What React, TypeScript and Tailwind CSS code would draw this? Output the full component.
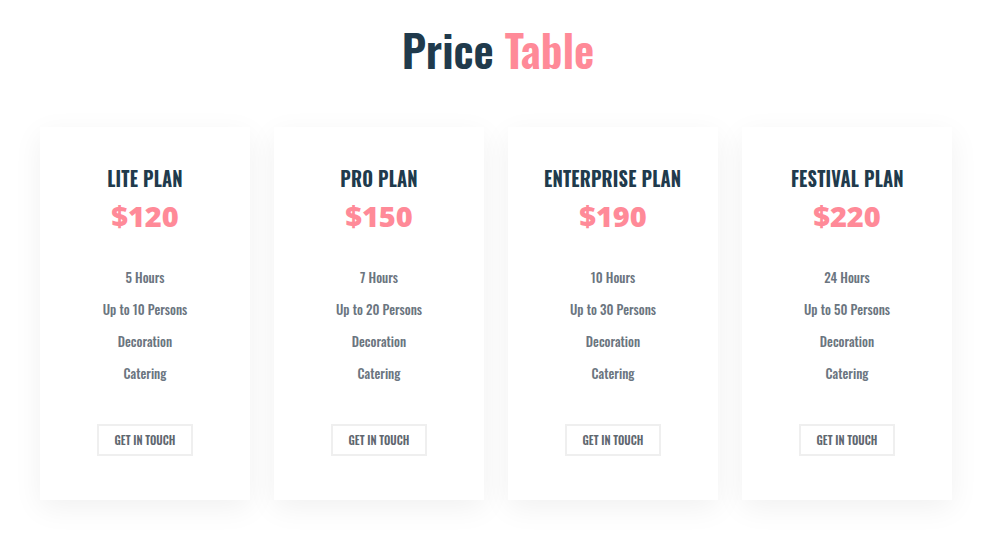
const plans = [
  { name: "LITE PLAN", price: "$120", hours: "5 Hours", persons: "Up to 10 Persons" },
  { name: "PRO PLAN", price: "$150", hours: "7 Hours", persons: "Up to 20 Persons" },
  { name: "ENTERPRISE PLAN", price: "$190", hours: "10 Hours", persons: "Up to 30 Persons" },
  { name: "FESTIVAL PLAN", price: "$220", hours: "24 Hours", persons: "Up to 50 Persons" },
];

const narrow = "font-['Oswald','Liberation_Sans_Narrow','DejaVu_Sans_Condensed',sans-serif]";

function PlanCard({ plan }: { plan: (typeof plans)[number] }) {
  return (
    <div className="w-[210px] h-[373px] bg-white shadow-[0_8px_28px_rgba(0,0,0,0.06)] flex flex-col items-center pt-[38px]">
      <h3 className={`${narrow} text-[20px] leading-[26px] font-bold text-[#203a4c] tracking-[0.2px] scale-x-[0.92]`}>
        {plan.name}
      </h3>
      <p className="font-['Open_Sans',sans-serif] text-[29px] leading-[36px] font-extrabold text-[#ff8a98] mt-[7px]">
        {plan.price}
      </p>
      <ul className={`${narrow} mt-[33px] flex flex-col items-center gap-[12px] text-[13px] leading-[20px] text-[#6b7580] font-medium`}>
        <li>{plan.hours}</li>
        <li>{plan.persons}</li>
        <li>Decoration</li>
        <li>Catering</li>
      </ul>
      <button
        className={`${narrow} mt-[41px] w-[96px] h-[32px] border-2 border-[#efefef] text-[11px] font-semibold text-[#5f6770]`}
      >
        GET IN TOUCH
      </button>
    </div>
  );
}

export default function App() {
  return (
    <div className="w-[996px] h-[536px] bg-white pt-[22px]">
      <h1 className={`${narrow} text-center text-[44px] leading-[56px] font-semibold`}>
        <span className="text-[#203a4c]">Price</span>{" "}
        <span className="text-[#ff8a98]">Table</span>
      </h1>
      <div className="mt-[49px] flex gap-6 pl-[40px]">
        {plans.map((p) => (
          <PlanCard key={p.name} plan={p} />
        ))}
      </div>
    </div>
  );
}
